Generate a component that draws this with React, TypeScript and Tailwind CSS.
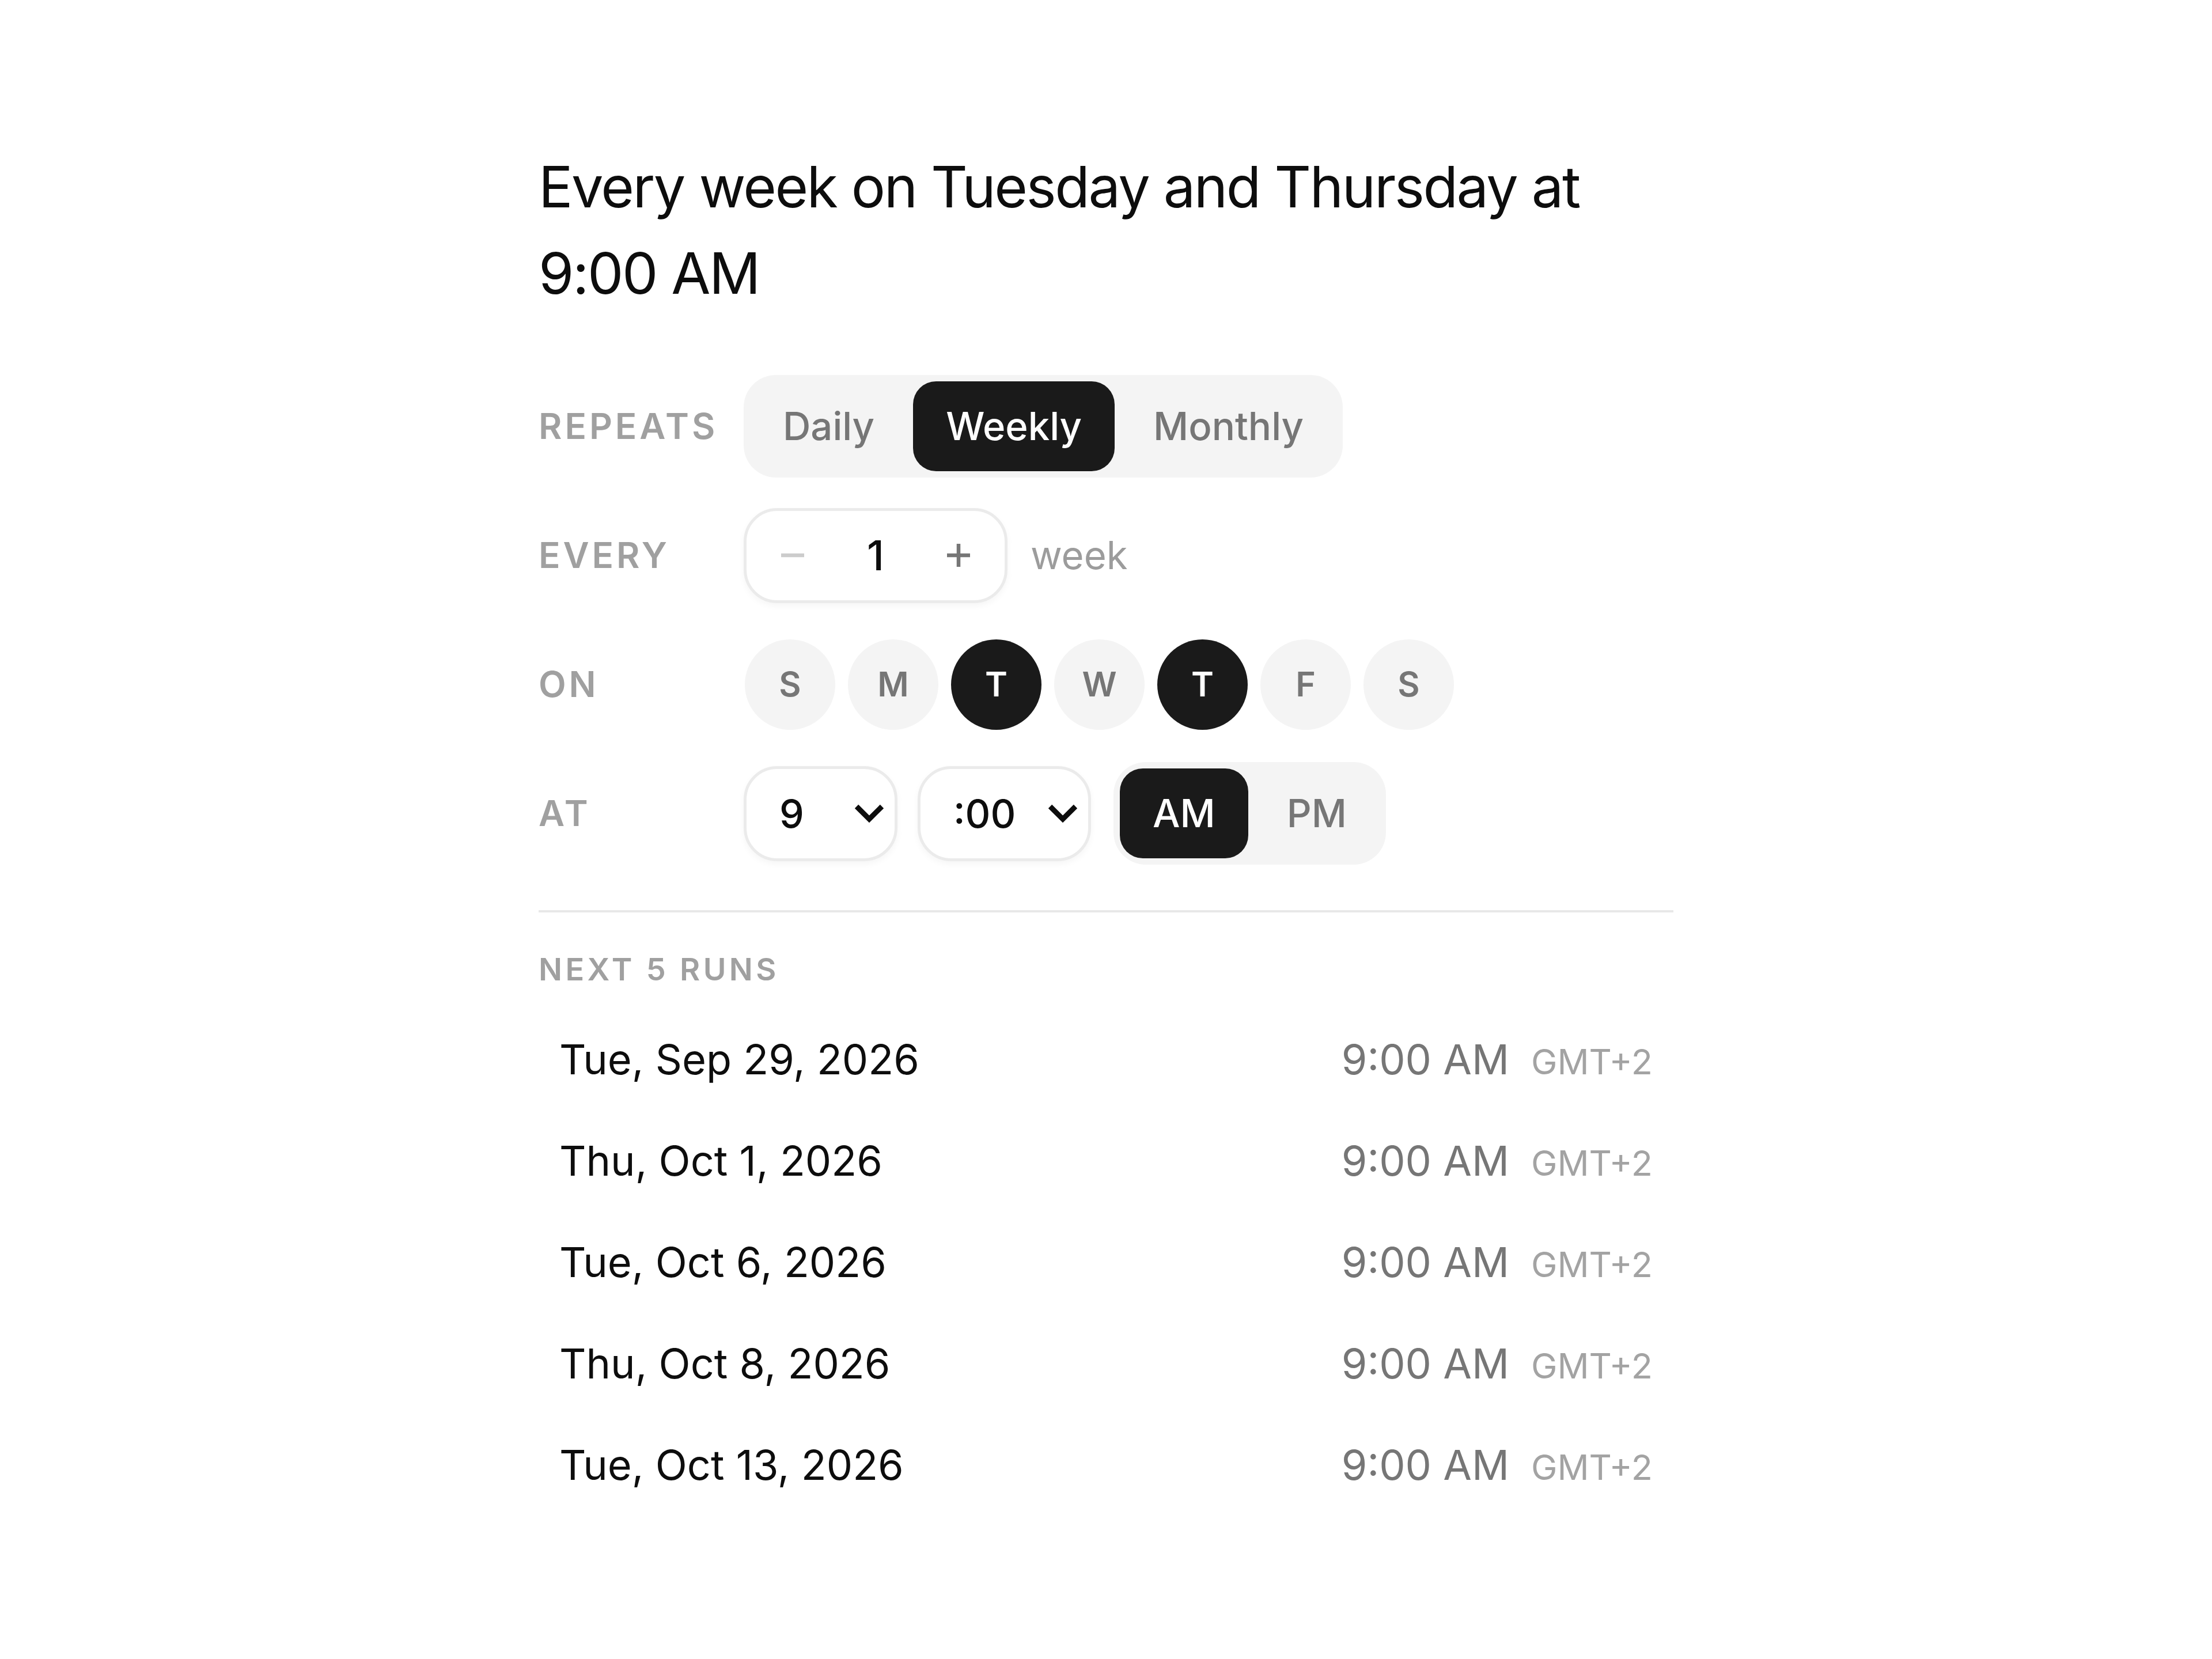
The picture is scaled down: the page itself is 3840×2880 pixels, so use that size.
import { useState } from "react";

const DAYS = ["S", "M", "T", "W", "T", "F", "S"];
const RUNS = [
  "Tue, Sep 29, 2026",
  "Thu, Oct 1, 2026",
  "Tue, Oct 6, 2026",
  "Thu, Oct 8, 2026",
  "Tue, Oct 13, 2026",
];

function Label({ children }: { children: React.ReactNode }) {
  return (
    <div className="w-[356px] shrink-0 text-[62px] font-semibold leading-none tracking-[0.08em] text-[#a0a0a0]">
      {children}
    </div>
  );
}

function Segmented({
  options,
  value,
  onChange,
}: {
  options: string[];
  value: string;
  onChange: (v: string) => void;
}) {
  return (
    <div className="flex h-[178px] items-center gap-[10px] rounded-[56px] bg-[#f4f4f4] p-[11px]">
      {options.map((opt) => (
        <button
          key={opt}
          type="button"
          onClick={() => onChange(opt)}
          className={
            value === opt
              ? "h-[156px] rounded-[40px] bg-[#1a1a1a] px-[57px] text-[67px] font-medium text-white"
              : "h-[156px] rounded-[40px] px-[57px] text-[67px] font-medium text-[#767676]"
          }
        >
          {opt}
        </button>
      ))}
    </div>
  );
}

function Chevron() {
  return (
    <svg width="52" height="34" viewBox="0 0 52 34" fill="none">
      <polyline
        points="4,5 26,27 48,5"
        stroke="#0d0d0d"
        strokeWidth="9"
        strokeLinejoin="miter"
      />
    </svg>
  );
}

function Select({ value, width }: { value: string; width: string }) {
  return (
    <div
      className={`flex h-[165px] items-center justify-between rounded-[58px] border-[5px] border-[#ebebeb] bg-white pl-[57px] pr-[18px] shadow-[0_5px_12px_rgba(0,0,0,0.04)] ${width}`}
    >
      <span className="text-[68px] font-medium text-[#0d0d0d]">{value}</span>
      <Chevron />
    </div>
  );
}

export default function App() {
  const [repeat, setRepeat] = useState("Weekly");
  const [every, setEvery] = useState(1);
  const [days, setDays] = useState([false, false, true, false, true, false, false]);
  const [half, setHalf] = useState("AM");

  return (
    <main className="min-h-screen bg-white font-[Inter,sans-serif] text-[#0d0d0d]">
      <div className="mx-auto w-[1970px] pt-[249px] pb-[200px]">
        <h1 className="text-[99px] font-normal leading-[150px] tracking-[-0.025em]">
          Every week on Tuesday and Thursday at 9:00 AM
        </h1>

        <div className="mt-[101px] flex flex-col gap-[44px]">
          <div className="flex h-[180px] items-center">
            <Label>REPEATS</Label>
            <Segmented
              options={["Daily", "Weekly", "Monthly"]}
              value={repeat}
              onChange={setRepeat}
            />
          </div>

          <div className="flex h-[180px] items-center">
            <Label>EVERY</Label>
            <div className="flex h-[165px] w-[458px] items-center rounded-[58px] border-[5px] border-[#ebebeb] bg-white shadow-[0_5px_12px_rgba(0,0,0,0.04)]">
              <button
                type="button"
                onClick={() => setEvery(Math.max(1, every - 1))}
                className="flex h-full w-[160px] items-center justify-center"
              >
                <svg width="40" height="40" viewBox="0 0 40 40">
                  <line x1="0" y1="20" x2="40" y2="20" stroke="#cccccc" strokeWidth="6.5" />
                </svg>
              </button>
              <span className="flex-1 text-center text-[72px] font-medium leading-none">
                {every}
              </span>
              <button
                type="button"
                onClick={() => setEvery(every + 1)}
                className="flex h-full w-[160px] items-center justify-center"
              >
                <svg width="40" height="40" viewBox="0 0 40 40">
                  <line x1="0" y1="20" x2="40" y2="20" stroke="#767676" strokeWidth="6.5" />
                  <line x1="20" y1="0" x2="20" y2="40" stroke="#767676" strokeWidth="6.5" />
                </svg>
              </button>
            </div>
            <span className="ml-[40px] text-[67px] text-[#9c9c9c]">week</span>
          </div>

          <div className="flex h-[180px] items-center">
            <Label>ON</Label>
            <div className="ml-[2px] flex gap-[22px]">
              {DAYS.map((d, i) => (
                <button
                  key={i}
                  type="button"
                  onClick={() => setDays(days.map((v, j) => (j === i ? !v : v)))}
                  className={
                    days[i]
                      ? "flex h-[157px] w-[157px] items-center justify-center rounded-full bg-[#1a1a1a] text-[59px] font-semibold text-white"
                      : "flex h-[157px] w-[157px] items-center justify-center rounded-full bg-[#f4f4f4] text-[59px] font-semibold text-[#767676]"
                  }
                >
                  {d}
                </button>
              ))}
            </div>
          </div>

          <div className="flex h-[180px] items-center">
            <Label>AT</Label>
            <div className="flex items-center gap-[35px]">
              <Select value="9" width="w-[267px]" />
              <Select value=":00" width="w-[301px]" />
            </div>
            <div className="ml-[39px]">
              <Segmented options={["AM", "PM"]} value={half} onChange={setHalf} />
            </div>
          </div>
        </div>

        <div className="mt-[78px] h-[4px] bg-[#e8e8e8]" />

        <div className="mt-[58px] text-[54px] font-semibold leading-[82px] tracking-[0.1em] text-[#a0a0a0]">
          NEXT 5 RUNS
        </div>

        <div className="mt-[27px] flex flex-col">
          {RUNS.map((r) => (
            <div key={r} className="flex h-[176px] items-center justify-between px-[36px]">
              <span className="text-[72px] leading-none text-[#0d0d0d]">{r}</span>
              <span className="flex items-baseline gap-[38px] leading-none">
                <span className="text-[72px] text-[#767676]">9:00 AM</span>
                <span className="text-[61px] text-[#a3a3a3]">GMT+2</span>
              </span>
            </div>
          ))}
        </div>
      </div>
    </main>
  );
}
